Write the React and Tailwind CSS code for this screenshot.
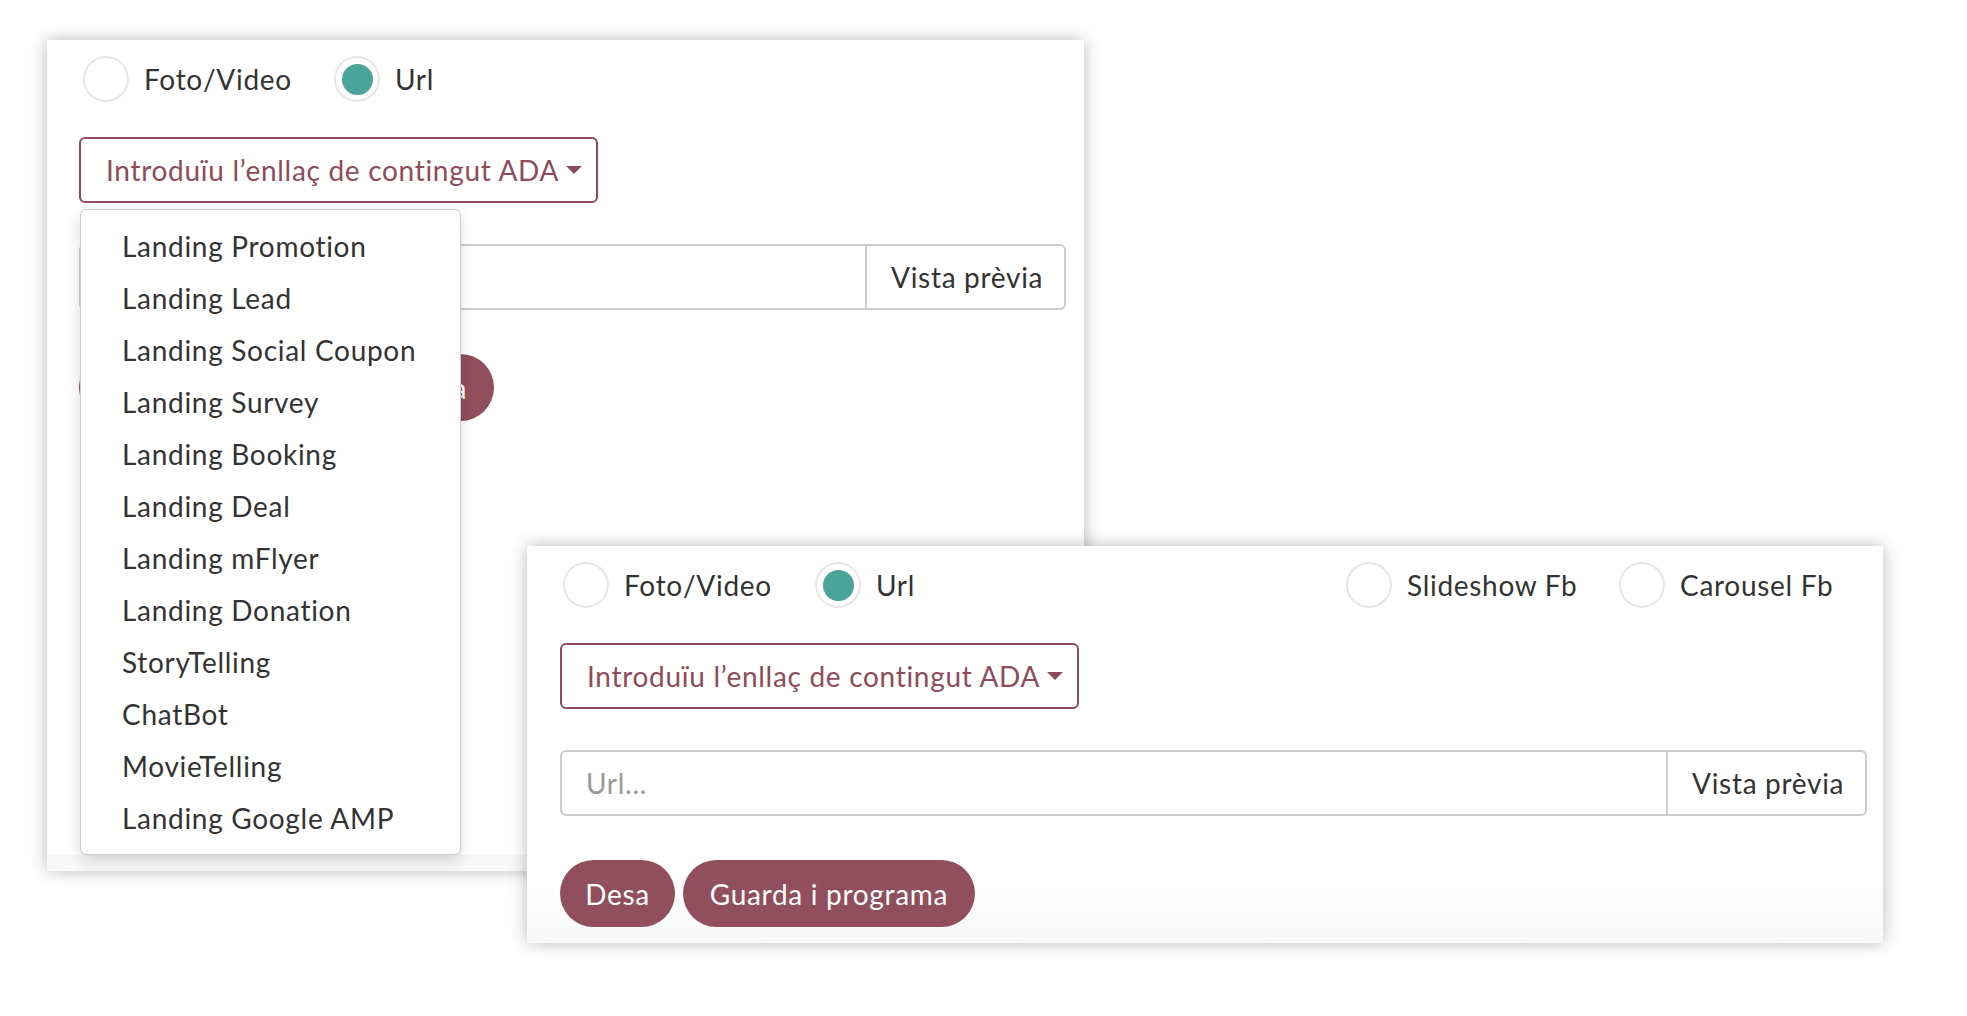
import React from "react";

const font = { fontFamily: "Lato, 'Open Sans', sans-serif" };

function Radio({ checked, label, itemClass = "" }) {
  return (
    <div className={"flex items-center " + itemClass}>
      <div className="w-[46px] h-[46px] shrink-0 rounded-full border-2 border-[#e6e6e6] bg-white flex items-center justify-center">
        {checked && <div className="w-[31px] h-[31px] rounded-full bg-[#4ba39a]" />}
      </div>
      <span className="ml-[15px] text-[28px] leading-[40px] text-[#333333] whitespace-nowrap">{label}</span>
    </div>
  );
}

function DropButton() {
  return (
    <div className="h-[66px] w-[519px] border-2 border-[#8e4b5a] rounded-[6px] pl-[25px] flex items-center text-[#8e4b5a] text-[28px] whitespace-nowrap bg-white">
      <span>Introduïu l’enllaç de contingut ADA</span>
      <span className="ml-[7px] w-0 h-0 border-l-[8px] border-r-[8px] border-t-[8px] border-l-transparent border-r-transparent border-t-[#8e4b5a]" />
    </div>
  );
}

function InputGroup({ width, placeholder }) {
  return (
    <div className={"flex h-[66px] " + width}>
      <div className="flex-1 border-2 border-[#cccccc] rounded-l-[6px] flex items-center pl-[24px] text-[28px] text-[#999999] bg-white">
        {placeholder}
      </div>
      <div className="w-[199px] border-2 border-l-0 border-[#cccccc] rounded-r-[6px] flex items-center pl-[24px] text-[28px] text-[#333333] bg-white whitespace-nowrap">
        Vista prèvia
      </div>
    </div>
  );
}

function Buttons() {
  return (
    <div className="flex gap-[8px]">
      <button className="h-[67px] w-[115px] rounded-full bg-[#914e5d] text-white text-[28px] flex items-center justify-center">Desa</button>
      <button className="h-[67px] w-[292px] rounded-full bg-[#914e5d] text-white text-[28px] flex items-center justify-center whitespace-nowrap">Guarda i programa</button>
    </div>
  );
}

const items = [
  "Landing Promotion",
  "Landing Lead",
  "Landing Social Coupon",
  "Landing Survey",
  "Landing Booking",
  "Landing Deal",
  "Landing mFlyer",
  "Landing Donation",
  "StoryTelling",
  "ChatBot",
  "MovieTelling",
  "Landing Google AMP",
];

export default function App() {
  return (
    <div className="relative w-[1967px] h-[1016px] bg-white overflow-hidden tracking-[0.7px]" style={font}>
      {/* Card 1 */}
      <div className="ml-[47px] mt-[40px] w-[1037px] h-[831px] bg-[#fdfdfd] shadow-[0_0_16px_rgba(0,0,0,0.28)] flex flex-col">
        <div className="flex-1 pl-[32px] pr-[18px] pt-[16px] bg-white">
          <div className="flex items-center ml-[4px]">
            <Radio label="Foto/Video" itemClass="w-[251px]" />
            <Radio label="Url" checked />
          </div>
          <div className="relative mt-[35px] w-[519px]">
            <DropButton />
            <div className="absolute left-[1px] top-[72px] w-[381px] py-[10px] bg-white border border-[#cccccc] rounded-[6px] shadow-[0_6px_14px_rgba(0,0,0,0.15)] z-10">
              {items.map((t) => (
                <div key={t} className="h-[52px] leading-[52px] pl-[41px] text-[28px] text-[#333333] whitespace-nowrap">
                  {t}
                </div>
              ))}
            </div>
          </div>
          <div className="mt-[41px]">
            <InputGroup width="w-[987px]" placeholder="Url..." />
          </div>
          <div className="mt-[44px]">
            <Buttons />
          </div>
        </div>
        <div className="h-[16px] bg-[#f8f8f8]" />
      </div>

      {/* Card 2 */}
      <div className="absolute left-[527px] top-[546px] w-[1356px] h-[397px] bg-gradient-to-b from-white from-85% to-[#f7f7f7] shadow-[0_0_16px_rgba(0,0,0,0.28)] pl-[33px] pr-[16px] pt-[16px] z-20">
        <div className="flex items-center">
          <div className="flex items-center ml-[3px]">
            <Radio label="Foto/Video" itemClass="w-[252px]" />
            <Radio label="Url" checked />
          </div>
          <div className="flex items-center ml-auto">
            <Radio label="Slideshow Fb" itemClass="w-[273px]" />
            <Radio label="Carousel Fb" itemClass="w-[248px]" />
          </div>
        </div>
        <div className="mt-[35px]">
          <DropButton />
        </div>
        <div className="mt-[41px]">
          <InputGroup width="w-full" placeholder="Url..." />
        </div>
        <div className="mt-[44px]">
          <Buttons />
        </div>
      </div>
    </div>
  );
}
